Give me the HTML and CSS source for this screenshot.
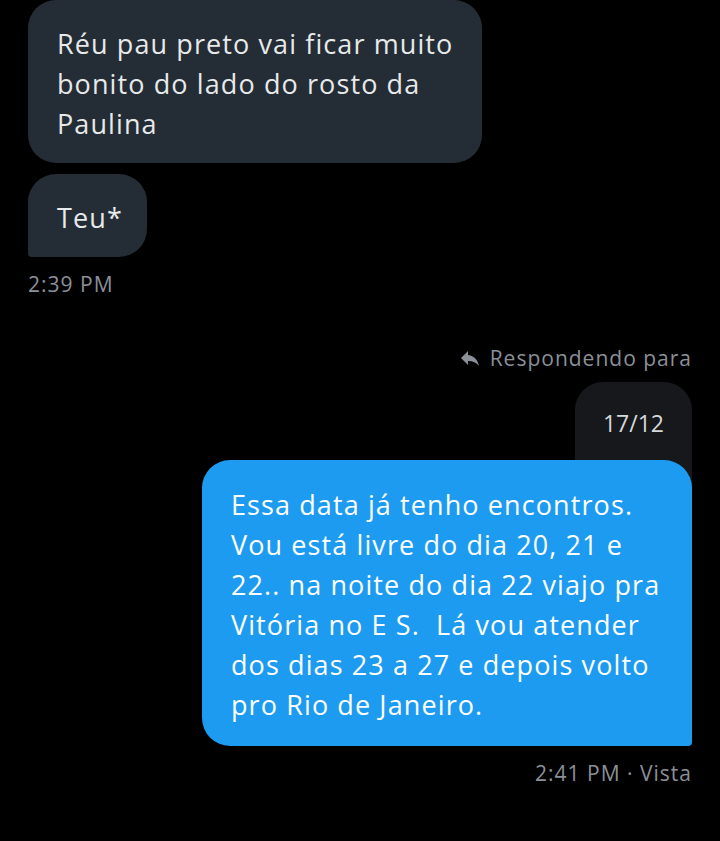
FILE: index.html
```html
<!DOCTYPE html>
<html>
<head>
  <meta charset="utf-8">
  <title>Mensagens</title>
  <link rel="stylesheet" href="styles.css">
</head>
<body>
  <div class="thread">
    <!-- received -->
    <div class="group received">
      <div class="bubble in">Réu pau preto vai ficar muito bonito do lado do rosto da Paulina</div>
      <div class="bubble in last">Teu*</div>
      <div class="meta">2:39 PM</div>
    </div>

    <!-- sent, replying -->
    <div class="group sent">
      <div class="reply-label">
        <svg class="reply-icon" viewBox="0 0 24 24" width="24" height="24"><path d="M10 9V5l-7 7 7 7v-4.1c5 0 8.5 1.6 11 5.1-1-5-4-10-11-11z" fill="#8b9098"/></svg>
        <span>Respondendo para</span>
      </div>
      <div class="quote">17/12</div>
      <div class="bubble out">Essa data já tenho encontros. Vou está livre do dia 20, 21 e 22.. na noite do dia 22 viajo pra Vitória no E S.&nbsp; Lá vou atender dos dias 23 a 27 e depois volto pro Rio de Janeiro.</div>
      <div class="meta">2:41 PM · Vista</div>
    </div>
  </div>
</body>
</html>
```

FILE: styles.css
```css
html, body {
  background-color: #000;
}
body {
  margin: 0;
  font-family: "Open Sans", "Noto Sans", sans-serif;
  color: #e7e9ea;
}
.thread {
  padding: 0 28px;
}
.group {
  display: flex;
  flex-direction: column;
}
.received {
  align-items: flex-start;
}
.sent {
  align-items: flex-end;
  margin-top: 48px;
}
.bubble {
  font-size: 27px;
  line-height: 40px;
  letter-spacing: 1.1px;
  padding: 24px 24px 19px 29px;
  border-radius: 28px;
  box-sizing: border-box;
}
.in {
  background-color: #242d35;
  color: #e7e9ea;
  max-width: 454px;
}
.in + .in {
  margin-top: 11px;
}
.in.last {
  border-bottom-left-radius: 4px;
}
.out {
  position: relative;
  background-color: #1d9bf0;
  color: #fff;
  width: 490px;
  padding-top: 25px;
  padding-right: 20px;
  padding-bottom: 21px;
  border-bottom-right-radius: 4px;
}
.meta {
  margin-top: 15px;
  font-size: 21px;
  line-height: 24px;
  letter-spacing: 1px;
  color: #8b9098;
}
.reply-label {
  display: flex;
  align-items: center;
  gap: 8px;
  font-size: 21px;
  line-height: 28px;
  letter-spacing: 1px;
  color: #8b9098;
}
.quote {
  margin-top: 10px;
  margin-bottom: -29px;
  padding: 25px 28px 50px;
  background-color: #16181c;
  color: #d6d9db;
  font-size: 23px;
  line-height: 32px;
  border-radius: 28px 28px 0 0;
}
```
